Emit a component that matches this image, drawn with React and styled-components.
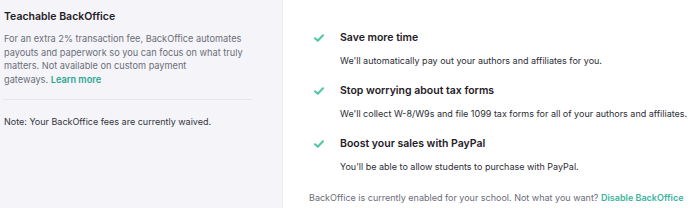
import React from "react";
import styled, { createGlobalStyle } from "styled-components";

const Global = createGlobalStyle`
  html, body { margin: 0; padding: 0; background: #ffffff; }
  body { font-family: Inter, "Noto Sans", sans-serif; -webkit-font-smoothing: antialiased; }
`;

const Page = styled.div`
  display: flex;
  width: 700px;
  height: 208px;
  overflow: hidden;
`;

const Sidebar = styled.aside`
  width: 283px;
  flex: none;
  box-sizing: border-box;
  background: #f5f5f9;
  border-right: 1px solid #ebebf0;
  padding: 10px 30px 0 4px;
`;

const Title = styled.h2`
  margin: 0 0 8px;
  font-size: 10.5px;
  font-weight: 600;
  color: #1f2027;
  line-height: 14px;
`;

const Paragraph = styled.p`
  margin: 0;
  max-width: 240px;
  font-size: 9.2px;
  line-height: 13.6px;
  color: #6b6d78;
`;

const NoWrap = styled.span`
  white-space: nowrap;
`;

const Link = styled.a`
  color: ${(p) => p.$color || "#2aa890"};
  font-weight: 600;
  text-decoration: none;
`;

const Divider = styled.hr`
  margin: 13px 0 15px -1px;
  border: none;
  height: 1px;
  background: #e6e6ec;
`;

const Note = styled.p`
  margin: 0;
  font-size: 9px;
  line-height: 13px;
  color: #33343c;
`;

const Main = styled.main`
  flex: 1;
  padding: 31px 0 0 26px;
  display: flex;
  flex-direction: column;
`;

const Features = styled.ul`
  list-style: none;
  margin: 0;
  padding: 0 0 0 5px;
  display: flex;
  flex-direction: column;
  gap: 17px;
`;

const Feature = styled.li`
  display: grid;
  grid-template-columns: 26px 1fr;
  row-gap: 9px;
  align-items: center;
`;

const Check = styled.svg`
  width: 10px;
  height: 8px;
  color: #4fc7a6;
`;

const FeatureTitle = styled.div`
  font-size: 10.5px;
  font-weight: 600;
  color: #1f2027;
  line-height: 14px;
`;

const FeatureText = styled.div`
  grid-column: 2;
  font-size: 9px;
  line-height: 13px;
  color: #2c2d35;
`;

const Footer = styled.p`
  margin: 18px 0 0;
  font-size: 9px;
  line-height: 13px;
  color: #6b6d78;
`;

const features = [
  { title: "Save more time", text: "We'll automatically pay out your authors and affiliates for you." },
  { title: "Stop worrying about tax forms", text: "We'll collect W-8/W9s and file 1099 tax forms for all of your authors and affiliates." },
  { title: "Boost your sales with PayPal", text: "You'll be able to allow students to purchase with PayPal." },
];

export default function App() {
  return (
    <Page>
      <Global />
      <Sidebar>
        <Title>Teachable BackOffice</Title>
        <Paragraph>
          For an extra 2% transaction fee, BackOffice automates payouts and paperwork so you can focus on what truly
          matters. Not available on custom payment{" "}
          <NoWrap>
            gateways. <Link href="#">Learn more</Link>
          </NoWrap>
        </Paragraph>
        <Divider />
        <Note>Note: Your BackOffice fees are currently waived.</Note>
      </Sidebar>
      <Main>
        <Features>
          {features.map((f) => (
            <Feature key={f.title}>
              <Check viewBox="0 0 10 8" fill="none">
                <path d="M1 4.2 L3.8 6.8 L9 1.2" stroke="currentColor" strokeWidth="2" strokeLinecap="round" strokeLinejoin="round" />
              </Check>
              <FeatureTitle>{f.title}</FeatureTitle>
              <FeatureText>{f.text}</FeatureText>
            </Feature>
          ))}
        </Features>
        <Footer>
          BackOffice is currently enabled for your school. Not what you want? <Link href="#" $color="#3bb49b">Disable BackOffice</Link>
        </Footer>
      </Main>
    </Page>
  );
}
